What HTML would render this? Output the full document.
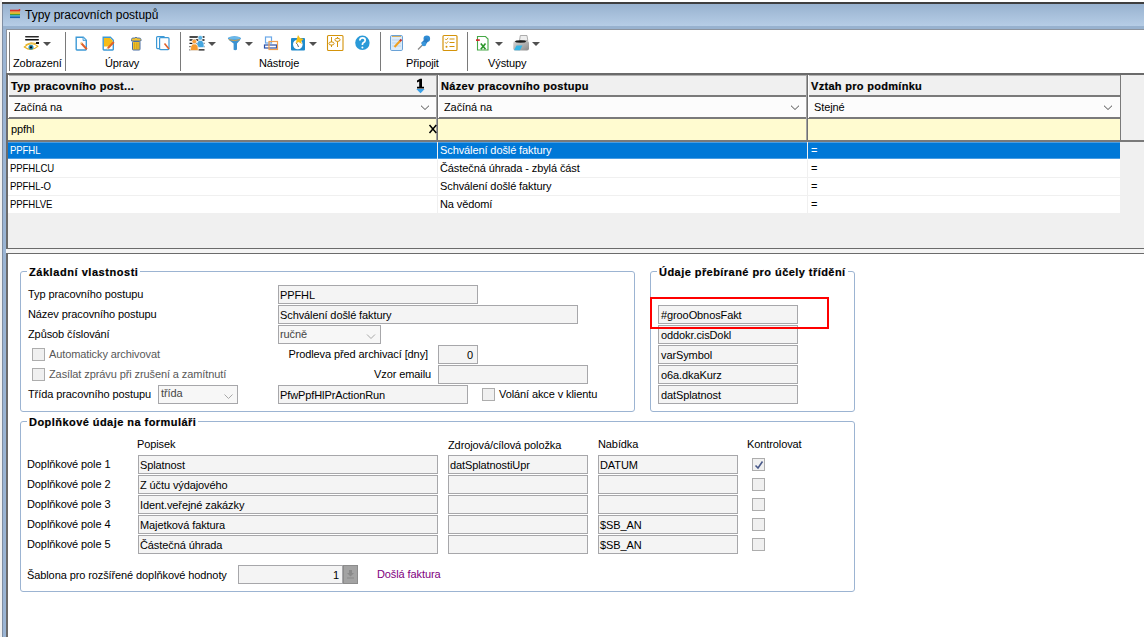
<!DOCTYPE html>
<html><head><meta charset="utf-8">
<style>
html,body{margin:0;padding:0}
body{width:1144px;height:637px;overflow:hidden;position:relative;background:#fff;font-family:"Liberation Sans",sans-serif;font-size:11px;color:#000}
div,span{position:absolute;box-sizing:border-box}
.t{white-space:nowrap;line-height:13px;letter-spacing:-0.1px}
.b{font-weight:bold;-webkit-text-stroke:0.2px #000}
.g{color:#585858}
.f{background:#f4f4f4;border:1px solid #a7a7aa;height:19px}
.cb{width:13px;height:13px;background:#f0f0f0;border:1px solid #adadad}
.sep{width:1px;top:32px;height:39px;background:#7a7a7a}
.gb{border:1px solid #9cb4d2;border-radius:3px}
.gt{background:#fff;padding:0 2px 0 2px;height:14px}
.chev{width:9px;height:5px}
</style></head><body>

<!-- window frame -->
<div style="left:0;top:0;width:2px;height:637px;background:#f0f0f0"></div>
<div style="left:2px;top:2px;width:1142px;height:2px;background:#3f3f3f"></div>
<div style="left:2px;top:4px;width:1px;height:633px;background:#7f8ea3"></div>
<div style="left:3px;top:4px;width:1141px;height:22px;background:linear-gradient(#98b2cf,#b6cde6)"></div>
<div style="left:3px;top:26px;width:1141px;height:3px;background:#98b2cf"></div>
<div style="left:3px;top:29px;width:3px;height:608px;background:#9bb5d4"></div>
<div style="left:6px;top:29px;width:1138px;height:1px;background:#8c939d"></div>
<div style="left:6px;top:30px;width:1px;height:43px;background:#8c939d"></div>

<!-- title -->
<svg style="position:absolute;left:10px;top:9px" width="11" height="10" viewBox="0 0 11 10">
<rect x="0" y="0.7" width="10" height="1.6" fill="#de2f2a"/><rect x="0" y="2.3" width="10" height="1.2" fill="#f08020"/>
<rect x="0" y="3.5" width="10" height="1.4" fill="#f3c010"/><rect x="0" y="4.9" width="10" height="1.5" fill="#4a9a34"/>
<rect x="0" y="6.4" width="10" height="1.1" fill="#1aa8dc"/><rect x="0" y="7.5" width="10" height="1.6" fill="#1a5fb0"/>
<circle cx="9.5" cy="0.9" r="0.9" fill="#de2f2a"/>
</svg>
<span class="t" style="left:25px;top:8px;font-size:12px;line-height:15px;letter-spacing:0">Typy pracovních postupů</span>

<!-- toolbar -->
<div id="toolbar" style="left:7px;top:30px;width:1137px;height:43px;background:#fff"></div>
<div class="sep" style="left:9px"></div>
<div class="sep" style="left:65px"></div>
<div class="sep" style="left:180px"></div>
<div class="sep" style="left:380px"></div>
<div class="sep" style="left:467px"></div>
<span class="t" style="left:13px;top:57px">Zobrazení</span>
<span class="t" style="left:105px;top:57px">Úpravy</span>
<span class="t" style="left:259px;top:57px">Nástroje</span>
<span class="t" style="left:406px;top:57px">Připojit</span>
<span class="t" style="left:488px;top:57px">Výstupy</span>
<svg style="position:absolute;left:0;top:0" width="560" height="60" viewBox="0 0 560 60">
<!-- eye -->
<rect x="25" y="36" width="14" height="1.6" rx="0.8" fill="#2a2a2a"/>
<rect x="25" y="39" width="14" height="1.6" rx="0.8" fill="#111"/>
<rect x="36" y="42" width="3" height="2" fill="#111"/>
<path d="M24.3 47 Q31 40.8 37.8 46.3 Q31.5 52.2 24.3 47Z" fill="#fff" stroke="#e6b324" stroke-width="1.1"/>
<path d="M25.5 44.8 Q31 41.5 36 43.5" fill="none" stroke="#e6b324" stroke-width="1"/>
<circle cx="31" cy="47.2" r="2.5" fill="#2a8fb5"/><circle cx="31" cy="47.4" r="1.1" fill="#0a0a0a"/>
<path d="M43 42 H51 L47 46Z" fill="#505050"/>
<!-- new doc -->
<path d="M76.2 37.2 H83.3 L86.3 40.2 V49.3 Q86.3 50 85.6 50 H76.9 Q76.2 50 76.2 49.3Z" fill="#fff" stroke="#3c99d6" stroke-width="1.4"/>
<path d="M83 37.3 V40.5 H86.2" fill="#bfe0f5" stroke="#3c99d6" stroke-width="0.8"/>
<path d="M81.3 43.3 L86.8 49.3" stroke="#e0622a" stroke-width="2"/><path d="M80.6 42.5 L81.6 43.6" stroke="#f3cf8a" stroke-width="2"/>
<!-- edit doc -->
<path d="M103.2 37.2 H110.3 L113.3 40.2 V49.3 Q113.3 50 112.6 50 H103.9 Q103.2 50 103.2 49.3Z" fill="#fff" stroke="#3c99d6" stroke-width="1.4"/>
<path d="M104 38 H110 L112.5 40.5 V44.5 L109.5 46.5 H104Z" fill="#f6bc18"/>
<path d="M107.8 48.3 L113.8 42" stroke="#e0622a" stroke-width="2"/><path d="M107 49.2 L108 48.2" stroke="#f3cf8a" stroke-width="1.8"/>
<!-- trash -->
<path d="M131.5 39.5 Q131.5 38 133 38 H135 Q136 36 137 38 H139 Q141 38 141 39.5 V41 H131.5Z" fill="#f2c230" stroke="#4a6fa5" stroke-width="0.9"/>
<rect x="132.5" y="41.5" width="7.5" height="8.5" rx="0.8" fill="#f2c230" stroke="#4a6fa5" stroke-width="1"/>
<path d="M134.5 42.5 V49 M136.3 42.5 V49 M138 42.5 V49" stroke="#c99a10" stroke-width="0.7"/>
<!-- copy doc -->
<rect x="156.6" y="36.6" width="8" height="12" rx="1" fill="#fff" stroke="#3c99d6" stroke-width="1.2"/>
<rect x="159.6" y="37.6" width="9.4" height="12" rx="1" fill="#fff" stroke="#3c99d6" stroke-width="1.2"/>
<path d="M164.5 43.5 L169 49" stroke="#e0622a" stroke-width="1.6"/>
<!-- people list -->
<path d="M189.5 37 H204.5 M189.5 40 H204.5 M189.5 43.3 H204.5 M189.5 46.7 H204.5 M189.5 49.8 H204.5" stroke="#111" stroke-width="1.3"/>
<circle cx="200.3" cy="37.8" r="2.4" fill="#5ab4e6" stroke="#fff" stroke-width="0.7"/>
<path d="M196.5 47.5 Q196.3 42.5 198.5 40.5 H202.2 Q204.4 42.5 204.2 47.5Z" fill="#45a6e0" stroke="#fff" stroke-width="0.7"/>
<circle cx="194.3" cy="41.6" r="2.4" fill="#f8a040" stroke="#fff" stroke-width="0.7"/>
<path d="M190.3 50.5 Q190.2 45.5 192.5 44 H196.2 Q198.5 45.5 198.4 50.5Z" fill="#f59a30" stroke="#fff" stroke-width="0.7"/>
<path d="M208 42 H216 L212 46Z" fill="#505050"/>
<!-- funnel -->
<path d="M227.8 38 Q234.4 34.5 241 38 Q240.5 40 237 43.5 V49.5 Q235.5 50.8 233.6 49.8 V43.5 Q228.3 40 227.8 38Z" fill="#3b92d2"/>
<ellipse cx="234.4" cy="38" rx="6" ry="1.6" fill="#6ab8ea"/>
<path d="M228.8 39.6 Q234.4 41.6 240 39.6" fill="none" stroke="#e0a040" stroke-width="0.9"/>
<path d="M245 42 H253 L249 46Z" fill="#505050"/>
<!-- monitors -->
<rect x="265.5" y="37" width="6" height="6" fill="none" stroke="#6aa8e8" stroke-width="1.2"/>
<rect x="264.5" y="45" width="12" height="3" fill="none" stroke="#2a4fa8" stroke-width="1.2"/>
<rect x="269" y="41.5" width="8.5" height="8" fill="none" stroke="#f0a050" stroke-width="1.2"/>
<!-- clock -->
<rect x="291" y="38" width="14" height="12.5" rx="1" fill="#1f8acb"/>
<circle cx="297.8" cy="44.5" r="4.8" fill="#fff"/>
<path d="M297.5 44.5 L296 42.8 M297.5 44.5 L298.5 47" stroke="#123" stroke-width="0.7"/>
<path d="M298 35 L300 38 L303.5 39 L301 41.5 L302 44 L298.5 42 L296 43.5 L296.5 40 Z" fill="#f5c018"/>
<path d="M309 42 H317 L313 46Z" fill="#505050"/>
<!-- sliders -->
<rect x="327.5" y="35.5" width="15.5" height="15" rx="1" fill="none" stroke="#d4930a" stroke-width="1.1"/>
<path d="M331.5 37 V47 M337.5 37 V47" stroke="#d4930a" stroke-width="1"/>
<ellipse cx="331.5" cy="43.5" rx="2.6" ry="1.6" fill="#fff" stroke="#d4930a" stroke-width="1"/>
<ellipse cx="337.5" cy="39.8" rx="2.6" ry="1.6" fill="#fff" stroke="#d4930a" stroke-width="1"/>
<!-- help -->
<circle cx="362.4" cy="42.8" r="7.2" fill="#2a9ad8"/>
<path d="M359.8 40.5 Q360 37.8 362.6 37.8 Q365.2 37.8 365.2 40.2 Q365.2 41.8 363.2 42.8 Q362.4 43.4 362.4 45" fill="none" stroke="#fff" stroke-width="1.7"/>
<circle cx="362.4" cy="47.4" r="1" fill="#fff"/>
<!-- notepad -->
<rect x="390.5" y="35.5" width="12" height="15" rx="1.3" fill="#dcecfa" stroke="#6aa2d6" stroke-width="1"/>
<path d="M392 36.5 H401" stroke="#d8b060" stroke-width="1"/>
<path d="M392 40 H401 M392 43 H401 M392 46 H401" stroke="#a8c8e8" stroke-width="0.6"/>
<path d="M394.5 47 L400.5 40.5" stroke="#f0a020" stroke-width="2"/><path d="M400 41 L401.5 39.5" stroke="#c03030" stroke-width="2"/>
<!-- pin -->
<path d="M418 49.5 L423 44.5" stroke="#888" stroke-width="1.3"/>
<circle cx="426.8" cy="38.8" r="3.3" fill="#2f8cd4"/>
<path d="M421 43 L426 38 L428.5 40.5 Q426 45 423.5 45.5Z" fill="#2a7cc4"/>
<circle cx="424" cy="44" r="2.3" fill="#3a96da"/>
<!-- checklist -->
<rect x="443" y="35.5" width="14" height="15" rx="1" fill="none" stroke="#d4930a" stroke-width="1.2"/>
<path d="M445.2 38.8 L446.3 40 L448.2 37.8 M445.2 42.3 L446.3 43.5 L448.2 41.3" fill="none" stroke="#d4930a" stroke-width="0.9"/>
<circle cx="446.5" cy="46.7" r="1" fill="#d4930a"/>
<path d="M449.5 39 H454.5 M449.5 42.5 H454.5 M449.5 46.5 H454.5" stroke="#d4930a" stroke-width="1.2"/>
<!-- excel -->
<path d="M477.5 36.5 H485.5 L488 39 V50 H477.5Z" fill="#fff" stroke="#46a846" stroke-width="1.1"/>
<rect x="476" y="39.3" width="3.8" height="1.6" fill="#d42020"/>
<path d="M480.8 43.5 L485.5 49.3 M485.5 43.5 L480.8 49.3" stroke="#2a962a" stroke-width="1.6"/>
<path d="M495 42 H503 L499 46Z" fill="#505050"/>
<!-- printer -->
<defs><linearGradient id="pg" x1="0" y1="0" x2="1" y2="1"><stop offset="0" stop-color="#d8d8d8"/><stop offset="1" stop-color="#8a8a8a"/></linearGradient></defs>
<path d="M519.5 40.5 L520.3 35.5 H527 L527.8 40.5Z" fill="#eeeeee" stroke="#9a9a9a" stroke-width="0.8"/>
<path d="M513.3 43 Q513.3 41 515.5 41 H527 Q529 41 529 43 V48.5 Q529 50.5 527 50.5 H515.5 Q513.3 50.5 513.3 48.5Z" fill="url(#pg)"/>
<ellipse cx="520.5" cy="41.5" rx="5.5" ry="1.2" fill="#1e1e1e"/>
<path d="M514 50.3 L516.5 45.5 H522.5 L520 50.3Z" fill="#36b6e6"/>
<path d="M532 42 H540 L536 46Z" fill="#505050"/>
</svg>

<!-- grid -->
<div style="left:6px;top:73px;width:1138px;height:2px;background:#6b6b6b"></div>
<div style="left:6px;top:75px;width:2px;height:179px;background:#6b6b6b"></div>
<div style="left:8px;top:75px;width:1136px;height:173px;background:#f0f0f0"></div>
<!-- header -->
<div style="left:8px;top:75px;width:1113px;height:20px;background:#f0f0f0;border-top:1px solid #b0b0b0"></div>
<div style="left:8px;top:95px;width:1113px;height:2px;background:#7a7a7a"></div>
<div style="left:8px;top:97px;width:1112px;height:20px;background:#fcfcfc"></div>
<div style="left:8px;top:117px;width:1113px;height:2px;background:#7a7a7a"></div>
<div style="left:8px;top:119px;width:1112px;height:21px;background:#fffbd0"></div>
<div style="left:8px;top:140px;width:1136px;height:2px;background:#7a7a7a"></div>
<div style="left:436px;top:75px;width:1px;height:65px;background:#a4a4a4"></div><div style="left:437px;top:75px;width:1px;height:65px;background:#707070"></div>
<div style="left:806px;top:75px;width:1px;height:65px;background:#a4a4a4"></div><div style="left:807px;top:75px;width:1px;height:65px;background:#707070"></div>
<div style="left:1120px;top:75px;width:1px;height:65px;background:#7a7a7a"></div>
<div style="left:8px;top:75px;width:1px;height:43px;background:#fff"></div>
<div style="left:438px;top:75px;width:1px;height:43px;background:#fff"></div>
<div style="left:808px;top:75px;width:1px;height:43px;background:#fff"></div>
<span class="t b" style="left:11px;top:80px;letter-spacing:0.3px">Typ pracovního post...</span>
<span class="t b" style="left:441px;top:80px;letter-spacing:0.3px">Název pracovního postupu</span>
<span class="t b" style="left:811px;top:80px;letter-spacing:0.3px">Vztah pro podmínku</span>
<span class="t" style="left:14px;top:101px">Začíná na</span>
<span class="t" style="left:444px;top:101px">Začíná na</span>
<span class="t" style="left:814px;top:101px">Stejné</span>
<span class="t" style="left:11px;top:123px">ppfhl</span>
<svg style="position:absolute;left:0;top:0" width="1144" height="140" viewBox="0 0 1144 140">
<path d="M417 80.6 L420 78.8 H422 V86.8 H424 V88.5 H417 V86.8 H419.2 V81.6 L417 82.6Z" fill="#000"/>
<path d="M416.3 89 H424.7 L420.5 93.3Z" fill="#3aa0e8"/>
<path d="M421 105.7 L425 109.5 L429 105.7" fill="none" stroke="#505050" stroke-width="1"/>
<path d="M791 105.7 L795 109.5 L799 105.7" fill="none" stroke="#505050" stroke-width="1"/>
<path d="M1104 105.7 L1108 109.5 L1112 105.7" fill="none" stroke="#505050" stroke-width="1"/>
<path d="M429.5 125 L436.3 133 M436.3 125 L429.5 133" stroke="#000" stroke-width="1.5"/>
</svg>
<!-- rows -->
<div style="left:8px;top:142px;width:1112px;height:71px;background:#fff"></div>
<div style="left:8px;top:142px;width:1112px;height:17px;background:#0078d7;border-top:1px solid #4a9de3;border-bottom:1px solid #4a9de3"></div>
<div style="left:8px;top:177px;width:1112px;height:1px;background:#f0f0f0"></div>
<div style="left:8px;top:195px;width:1112px;height:1px;background:#f0f0f0"></div>
<div style="left:437px;top:142px;width:1px;height:71px;background:#f0f0f0"></div>
<div style="left:807px;top:142px;width:1px;height:71px;background:#f0f0f0"></div>
<span class="t" style="left:10px;top:144px;color:#fff;transform:scaleX(0.87);transform-origin:0 0">PPFHL</span>
<span class="t" style="left:440px;top:144px;color:#fff">Schválení došlé faktury</span>
<span class="t" style="left:811px;top:144px;color:#fff">=</span>
<span class="t" style="left:10px;top:162px;transform:scaleX(0.87);transform-origin:0 0">PPFHLCU</span>
<span class="t" style="left:440px;top:162px">Částečná úhrada - zbylá část</span>
<span class="t" style="left:811px;top:162px">=</span>
<span class="t" style="left:10px;top:180px;transform:scaleX(0.87);transform-origin:0 0">PPFHL-O</span>
<span class="t" style="left:440px;top:180px">Schválení došlé faktury</span>
<span class="t" style="left:811px;top:180px">=</span>
<span class="t" style="left:10px;top:198px;transform:scaleX(0.87);transform-origin:0 0">PPFHLVE</span>
<span class="t" style="left:440px;top:198px">Na vědomí</span>
<span class="t" style="left:811px;top:198px">=</span>

<div style="left:6px;top:248px;width:1138px;height:1px;background:#6b6b6b"></div>
<div style="left:6px;top:249px;width:1138px;height:4px;background:#f4f4f4"></div>
<div style="left:6px;top:253px;width:1138px;height:1px;background:#6b6b6b"></div>
<div style="left:6px;top:254px;width:2px;height:383px;background:#6b6b6b"></div>


<!-- group 1 -->
<div class="gb" style="left:20px;top:271px;width:615px;height:141px"></div>
<span class="t b gt" style="left:27px;top:266px;letter-spacing:0.55px">Základní vlastnosti</span>
<span class="t" style="left:28px;top:288px">Typ pracovního postupu</span>
<span class="t" style="left:28px;top:308px">Název pracovního postupu</span>
<span class="t" style="left:28px;top:328px">Způsob číslování</span>
<div class="cb" style="left:32px;top:348px"></div>
<span class="t g" style="left:49px;top:348px">Automaticky archivovat</span>
<div class="cb" style="left:32px;top:368px"></div>
<span class="t g" style="left:49px;top:368px">Zasílat zprávu při zrušení a zamítnutí</span>
<span class="t" style="left:28px;top:388px">Třída pracovního postupu</span>
<div class="f" style="left:158px;top:385px;width:80px;background:#f7f7f7"></div>
<span class="t" style="left:161px;top:387px;color:#454545">třída</span>
<div class="f" style="left:278px;top:285px;width:200px"></div>
<span class="t" style="left:280px;top:289px">PPFHL</span>
<div class="f" style="left:278px;top:305px;width:300px"></div>
<span class="t" style="left:280px;top:309px">Schválení došlé faktury</span>
<div class="f" style="left:278px;top:325px;width:103px;background:#f7f7f7"></div>
<span class="t" style="left:280px;top:328px;color:#454545">ručně</span>
<span class="t" style="right:716px;top:348px">Prodleva před archivací [dny]</span>
<div class="f" style="left:438px;top:345px;width:40px"></div>
<span class="t" style="left:467px;top:349px">0</span>
<span class="t" style="right:713px;top:368px">Vzor emailu</span>
<div class="f" style="left:438px;top:365px;width:150px"></div>
<div class="f" style="left:278px;top:385px;width:190px"></div>
<span class="t" style="left:280px;top:389px">PfwPpfHlPrActionRun</span>
<div class="cb" style="left:482px;top:388px"></div>
<span class="t" style="left:499px;top:388px">Volání akce v klientu</span>

<svg style="position:absolute;left:0;top:0" width="400" height="410" viewBox="0 0 400 410">
<path d="M367 334.5 L371 338.5 L375 334.5" fill="none" stroke="#a8a8a8" stroke-width="1"/>
<path d="M224.5 394.5 L228.5 398.5 L232.5 394.5" fill="none" stroke="#a8a8a8" stroke-width="1"/>
</svg>
<!-- group 2 -->
<div class="gb" style="left:650px;top:271px;width:205px;height:141px"></div>
<span class="t b gt" style="left:657px;top:266px;letter-spacing:0.45px">Údaje přebírané pro účely třídění</span>
<div class="f" style="left:658px;top:305px;width:140px"></div>
<span class="t" style="left:661px;top:309px">#grooObnosFakt</span>
<div class="f" style="left:658px;top:325px;width:140px"></div>
<span class="t" style="left:661px;top:329px">oddokr.cisDokl</span>
<div class="f" style="left:658px;top:345px;width:140px"></div>
<span class="t" style="left:661px;top:349px">varSymbol</span>
<div class="f" style="left:658px;top:365px;width:140px"></div>
<span class="t" style="left:661px;top:369px">o6a.dkaKurz</span>
<div class="f" style="left:658px;top:385px;width:140px"></div>
<span class="t" style="left:661px;top:389px">datSplatnost</span>
<div style="left:650px;top:297px;width:179px;height:32px;border:2px solid #ff0000"></div>

<!-- group 3 -->
<div class="gb" style="left:20px;top:421px;width:835px;height:171px"></div>
<span class="t b gt" style="left:27px;top:416px;letter-spacing:0.45px">Doplňkové údaje na formuláři</span>
<span class="t" style="left:137px;top:438px">Popisek</span>
<span class="t" style="left:448px;top:439px">Zdrojová/cílová položka</span>
<span class="t" style="left:598px;top:438px">Nabídka</span>
<span class="t" style="left:747px;top:438px">Kontrolovat</span>
<span class="t" style="left:27px;top:458px">Doplňkové pole 1</span>
<div class="f" style="left:138px;top:455px;width:300px"></div><span class="t" style="left:140px;top:459px">Splatnost</span>
<div class="f" style="left:448px;top:455px;width:140px"></div><span class="t" style="left:450px;top:459px">datSplatnostiUpr</span>
<div class="f" style="left:598px;top:455px;width:140px"></div><span class="t" style="left:600px;top:459px">DATUM</span>
<div class="cb" style="left:752px;top:458px"></div>
<span class="t" style="left:27px;top:478px">Doplňkové pole 2</span>
<div class="f" style="left:138px;top:475px;width:300px"></div><span class="t" style="left:140px;top:479px">Z účtu výdajového</span>
<div class="f" style="left:448px;top:475px;width:140px"></div><span class="t" style="left:450px;top:479px"></span>
<div class="f" style="left:598px;top:475px;width:140px"></div><span class="t" style="left:600px;top:479px"></span>
<div class="cb" style="left:752px;top:478px"></div>
<span class="t" style="left:27px;top:498px">Doplňkové pole 3</span>
<div class="f" style="left:138px;top:495px;width:300px"></div><span class="t" style="left:140px;top:499px">Ident.veřejné zakázky</span>
<div class="f" style="left:448px;top:495px;width:140px"></div><span class="t" style="left:450px;top:499px"></span>
<div class="f" style="left:598px;top:495px;width:140px"></div><span class="t" style="left:600px;top:499px"></span>
<div class="cb" style="left:752px;top:498px"></div>
<span class="t" style="left:27px;top:518px">Doplňkové pole 4</span>
<div class="f" style="left:138px;top:515px;width:300px"></div><span class="t" style="left:140px;top:519px">Majetková faktura</span>
<div class="f" style="left:448px;top:515px;width:140px"></div><span class="t" style="left:450px;top:519px"></span>
<div class="f" style="left:598px;top:515px;width:140px"></div><span class="t" style="left:600px;top:519px">$SB_AN</span>
<div class="cb" style="left:752px;top:518px"></div>
<span class="t" style="left:27px;top:538px">Doplňkové pole 5</span>
<div class="f" style="left:138px;top:535px;width:300px"></div><span class="t" style="left:140px;top:539px">Částečná úhrada</span>
<div class="f" style="left:448px;top:535px;width:140px"></div><span class="t" style="left:450px;top:539px"></span>
<div class="f" style="left:598px;top:535px;width:140px"></div><span class="t" style="left:600px;top:539px">$SB_AN</span>
<div class="cb" style="left:752px;top:538px"></div>
<svg style="position:absolute;left:754px;top:460px" width="10" height="10" viewBox="0 0 10 10"><path d="M1.5 5.5 L4 8 L8.5 1.5" fill="none" stroke="#4a5a8a" stroke-width="1.6"/></svg>
<span class="t" style="left:27px;top:569px">Šablona pro rozšířené doplňkové hodnoty</span>
<div class="f" style="left:238px;top:565px;width:105px"></div>
<span class="t" style="left:333px;top:569px">1</span>
<div style="left:343px;top:565px;width:15px;height:19px;background:#a3a3a3;border:1px solid #8c8c8c"></div><svg style="position:absolute;left:346px;top:569px" width="9" height="11" viewBox="0 0 9 11"><path d="M3 1 H6 V4 H8 L4.5 7.5 L1 4 H3Z" fill="#8a8a8a"/><rect x="1" y="8.5" width="7" height="1" fill="#8a8a8a"/></svg>
<span class="t" style="left:377px;top:568px;color:#800080">Došlá faktura</span>

</body></html>
